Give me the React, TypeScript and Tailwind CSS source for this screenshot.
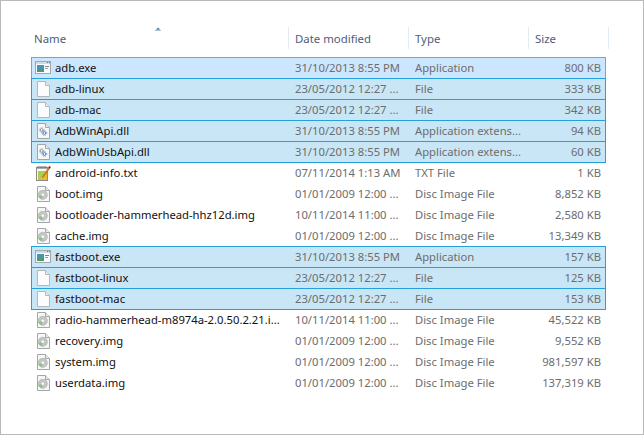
import React from 'react';

type Kind = 'exe' | 'file' | 'dll' | 'txt' | 'img';
type Row = { name: string; date: string; type: string; size: string; kind: Kind; sel?: boolean; hot?: boolean };

const rows: Row[] = [
  { name: 'adb.exe', date: '31/10/2013 8:55 PM', type: 'Application', size: '800 KB', kind: 'exe', sel: true, hot: true },
  { name: 'adb-linux', date: '23/05/2012 12:27 ...', type: 'File', size: '333 KB', kind: 'file', sel: true },
  { name: 'adb-mac', date: '23/05/2012 12:27 ...', type: 'File', size: '342 KB', kind: 'file', sel: true },
  { name: 'AdbWinApi.dll', date: '31/10/2013 8:55 PM', type: 'Application extens...', size: '94 KB', kind: 'dll', sel: true },
  { name: 'AdbWinUsbApi.dll', date: '31/10/2013 8:55 PM', type: 'Application extens...', size: '60 KB', kind: 'dll', sel: true },
  { name: 'android-info.txt', date: '07/11/2014 1:13 AM', type: 'TXT File', size: '1 KB', kind: 'txt' },
  { name: 'boot.img', date: '01/01/2009 12:00 ...', type: 'Disc Image File', size: '8,852 KB', kind: 'img' },
  { name: 'bootloader-hammerhead-hhz12d.img', date: '10/11/2014 11:00 ...', type: 'Disc Image File', size: '2,580 KB', kind: 'img' },
  { name: 'cache.img', date: '01/01/2009 12:00 ...', type: 'Disc Image File', size: '13,349 KB', kind: 'img' },
  { name: 'fastboot.exe', date: '31/10/2013 8:55 PM', type: 'Application', size: '157 KB', kind: 'exe', sel: true },
  { name: 'fastboot-linux', date: '23/05/2012 12:27 ...', type: 'File', size: '125 KB', kind: 'file', sel: true },
  { name: 'fastboot-mac', date: '23/05/2012 12:27 ...', type: 'File', size: '153 KB', kind: 'file', sel: true },
  { name: 'radio-hammerhead-m8974a-2.0.50.2.21.i...', date: '10/11/2014 11:00 ...', type: 'Disc Image File', size: '45,522 KB', kind: 'img' },
  { name: 'recovery.img', date: '01/01/2009 12:00 ...', type: 'Disc Image File', size: '9,552 KB', kind: 'img' },
  { name: 'system.img', date: '01/01/2009 12:00 ...', type: 'Disc Image File', size: '981,597 KB', kind: 'img' },
  { name: 'userdata.img', date: '01/01/2009 12:00 ...', type: 'Disc Image File', size: '137,319 KB', kind: 'img' },
];

const Gear = ({ cx, cy, color }: { cx: number; cy: number; color: string }) => (
  <g fill="none" stroke={color}>
    <circle cx={cx} cy={cy} r="1.4" strokeWidth="1" />
    <circle cx={cx} cy={cy} r="2.4" strokeWidth=".7" strokeDasharray="1 .8" />
  </g>
);

const FileIcon = ({ kind }: { kind: Kind }) => {
  if (kind === 'exe') {
    return (
      <svg className="shrink-0" width="16" height="16" viewBox="0 0 16 16" shapeRendering="crispEdges">
        <rect x=".5" y="1.5" width="15" height="12" fill="#f8fafb" stroke="#a0a8b0" />
        <rect x="1" y="2" width="14" height="2" fill="#d2d9e0" />
        <rect x="12" y="2" width="1" height="1" fill="#6f7a85" />
        <rect x="14" y="2" width="1" height="1" fill="#6f7a85" />
        <rect x="2" y="5" width="7" height="7" fill="#4a93b8" />
        <rect x="2" y="9" width="7" height="3" fill="#4c9a6a" />
        <rect x="10" y="6" width="4" height="1" fill="#7d8790" />
        <rect x="10" y="8" width="3" height="1" fill="#98a1a9" />
      </svg>
    );
  }
  if (kind === 'txt') {
    return (
      <svg className="shrink-0" width="16" height="16" viewBox="0 0 16 16">
        <rect x="1.5" y="2.5" width="11" height="13" fill="#f7f7f2" stroke="#8a8a8a" />
        <path d="M3 1V4M5 1V4M7 1V4M9 1V4M11 1V4" stroke="#666" strokeDasharray="1.5 .5" />
        <rect x="3" y="6" width="9" height="9" fill="#a9cf55" />
        <path d="M3 15L12 8V15Z" fill="#e2c03a" />
        <path d="M7.5 12.5L14.5 2.5" stroke="#d4781f" strokeWidth="2" />
        <path d="M14 3.2L15.2 1.5" stroke="#a82222" strokeWidth="2" />
      </svg>
    );
  }
  return (
    <svg className="shrink-0" width="16" height="16" viewBox="0 0 16 16">
      <path
        d="M2.5 .5H10.5L14.5 4.5V15.5H2.5Z"
        fill={kind === 'file' ? '#fcfcfc' : '#f7f7f7'}
        stroke={kind === 'file' ? '#b4b8bc' : '#a2a7ab'}
      />
      <path d="M10.5 .5V4.5H14.5" fill="#ececec" stroke={kind === 'file' ? '#b4b8bc' : '#a2a7ab'} />
      {kind === 'dll' && (
        <g>
          <Gear cx={6.6} cy={7} color="#8f99a8" />
          <Gear cx={9.4} cy={10} color="#4a83c8" />
        </g>
      )}
      {kind === 'img' && (
        <g>
          <circle cx="7.8" cy="8.8" r="4.6" fill="#c3c6c3" stroke="#a2a4a2" strokeWidth=".5" />
          <path d="M7.8 8.8L3.4 10A4.6 4.6 0 0 0 7 13.3Z" fill="#86c486" />
          <circle cx="7.8" cy="8.8" r="1.3" fill="#ffffff" />
        </g>
      )}
    </svg>
  );
};

const HeadCell = ({ label, width }: { label: string; width: string }) => (
  <div className={`${width} h-[22px] flex items-center pt-[1px] pl-[6px] border-r border-[#e3ebf3]`}>{label}</div>
);

export default function App() {
  return (
    <div
      className="w-[644px] h-[435px] bg-white border border-[#b9b9b9] overflow-hidden text-[11.25px]"
      style={{ fontFamily: '"Noto Sans", "Open Sans", sans-serif' }}
    >
      <div className="relative pl-[27px] pt-[26px] h-[56px] text-[11.4px]">
        <svg className="absolute left-[153px] top-[26px]" width="8" height="5" viewBox="0 0 8 5">
          <path d="M4 .5L7.5 4H.5Z" fill="#a8c4dc" />
          <path d="M4 .5L6 2.5H2Z" fill="#5f7f9f" />
        </svg>
        <div className="flex text-[#4c607a]">
          <HeadCell label="Name" width="w-[261px]" />
          <HeadCell label="Date modified" width="w-[120px]" />
          <HeadCell label="Type" width="w-[120px]" />
          <HeadCell label="Size" width="w-[80px]" />
        </div>
      </div>
      <div className="pl-[30px] w-[605px]">
        {rows.map((r) => (
          <div
            key={r.name}
            className={`flex items-center h-[22px] -mb-px border ${
              r.sel
                ? r.hot
                  ? 'relative bg-[#cde6ff] border-[#66a7e8]'
                  : 'relative bg-[#c9e6f6] border-[#26a0da]'
                : 'border-transparent'
            }`}
          >
            <div className="w-[263px] flex items-center pl-[3px] shrink-0">
              <FileIcon kind={r.kind} />
              <span className="ml-[4px] text-[#111] whitespace-nowrap">{r.name}</span>
            </div>
            <div className="w-[120px] shrink-0 text-[#6d6d6d] whitespace-nowrap">{r.date}</div>
            <div className="w-[120px] shrink-0 text-[#6d6d6d] whitespace-nowrap">{r.type}</div>
            <div className="flex-1 pr-[4px] text-right text-[#6d6d6d] whitespace-nowrap">{r.size}</div>
          </div>
        ))}
      </div>
    </div>
  );
}
